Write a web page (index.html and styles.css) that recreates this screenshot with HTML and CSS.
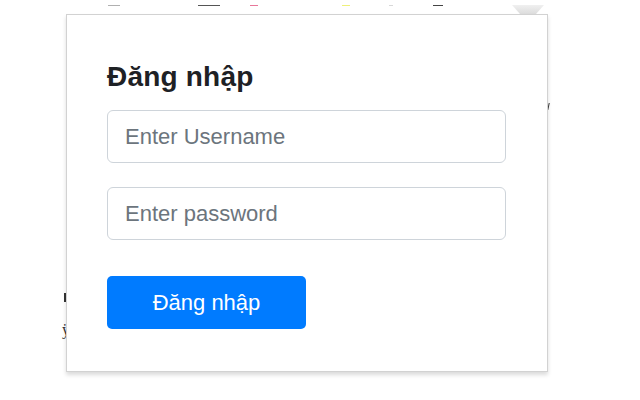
FILE: index.html
```html
<!DOCTYPE html>
<html lang="vi">
<head>
<meta charset="utf-8">
<title>Đăng nhập</title>
<link rel="stylesheet" href="styles.css">
</head>
<body>
<div class="page">
  <div class="backdrop" aria-hidden="true">
    <span class="mark m1"></span>
    <span class="mark m2"></span>
    <span class="mark m3"></span>
    <span class="mark m4"></span>
    <span class="mark m5"></span>
    <span class="mark m6"></span>
    <span class="tab"></span>
    <span class="bar b1"></span>
    <span class="glyph g2">ÿ</span>
    <span class="bar b3"></span>
  </div>
  <div class="popup">
    <h1 class="title">Đăng nhập</h1>
    <form class="form">
      <input class="field" type="text" placeholder="Enter Username">
      <input class="field" type="password" placeholder="Enter password">
      <button class="btn" type="button">Đăng nhập</button>
    </form>
  </div>
</div>
</body>
</html>
```

FILE: styles.css
```css
html, body {
  margin: 0;
  padding: 0;
  background: #ffffff;
}

.page {
  position: relative;
  width: 640px;
  height: 400px;
  overflow: hidden;
  font-family: "Liberation Sans", Arial, sans-serif;
}

.backdrop {
  position: absolute;
  inset: 0;
  z-index: 0;
}

.mark {
  position: absolute;
  height: 1px;
  top: 5px;
}
.m1 { left: 108px; width: 12px; background: #b0b0b0; }
.m2 { left: 198px; width: 22px; background: #555; }
.m3 { left: 250px; width: 8px; background: #e8789a; }
.m4 { left: 342px; width: 8px; background: #eef07a; }
.m5 { left: 389px; width: 4px; background: #d8d8d8; }
.m6 { left: 433px; width: 10px; background: #444; }

.tab {
  position: absolute;
  left: 512px;
  top: 5px;
  width: 32px;
  height: 9px;
  background: linear-gradient(#f0f0f0, #dcdcdc);
  clip-path: polygon(0 0, 100% 0, 75% 100%, 25% 100%);
}

.bar {
  position: absolute;
  background: #333;
}
.b1 { left: 64px; top: 293px; width: 2px; height: 9px; }
.b3 { left: 548px; top: 103px; width: 1px; height: 7px; transform: skewX(-12deg); }

.glyph {
  position: absolute;
  font-family: "Liberation Serif", serif;
  font-size: 16px;
  color: #333;
  line-height: 1;
}
.g2 { left: 62px; top: 322px; }

.popup {
  position: relative;
  z-index: 1;
  box-sizing: border-box;
  width: 482px;
  height: 358px;
  margin: 14px 0 0 66px;
  padding: 45px 41px 0 40px;
  background: #ffffff;
  border: 1px solid #d2d2d2;
  box-shadow: 0 3px 4px rgba(0, 0, 0, 0.14);
}

.title {
  margin: 0 0 16px 0;
  font-size: 28px;
  line-height: 34px;
  font-weight: 700;
  color: #1e2125;
  letter-spacing: 0.2px;
}

.form {
  display: flex;
  flex-direction: column;
  align-items: flex-start;
  margin: 0;
}

.field {
  box-sizing: border-box;
  width: 399px;
  height: 53px;
  margin: 0 0 24px 0;
  padding: 0 17px;
  border: 1px solid #ced4da;
  border-radius: 6px;
  font-family: "Liberation Sans", Arial, sans-serif;
  font-size: 22px;
  color: #495057;
  background: #fff;
  outline: none;
}

.field::placeholder {
  color: #6c757d;
  opacity: 1;
}

.btn {
  box-sizing: border-box;
  width: 199px;
  height: 53px;
  margin-top: 12px;
  border: none;
  border-radius: 5px;
  background: #007bff;
  color: #ffffff;
  font-family: "Liberation Sans", Arial, sans-serif;
  font-size: 22px;
  cursor: pointer;
}
```
